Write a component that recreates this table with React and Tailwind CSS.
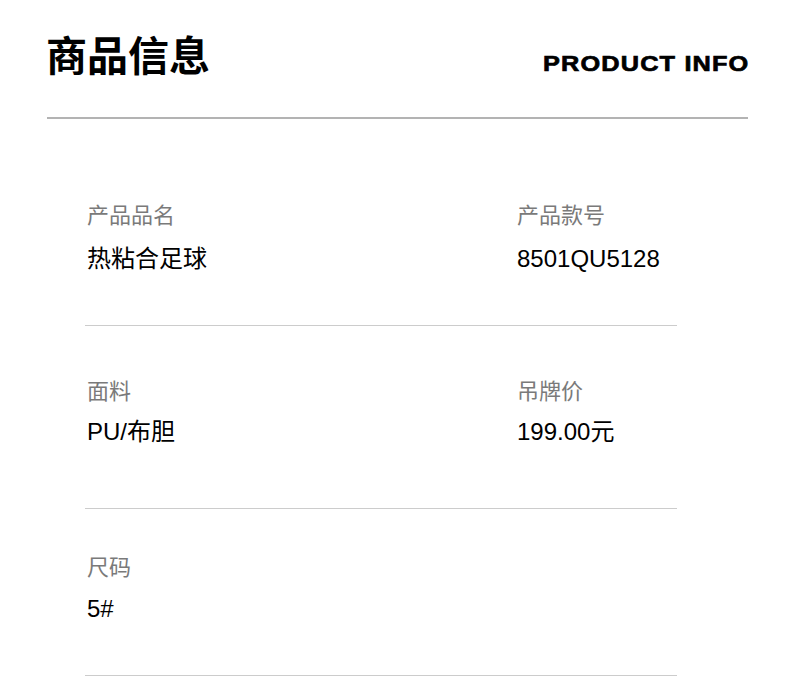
import React from 'react';

const font = { fontFamily: '"Liberation Sans", "Noto Sans CJK SC", sans-serif' };

const rows = [
  {
    pad: 'pt-[86px] pb-[54px]',
    gap: 'mt-[20px]',
    items: [
      { label: '产品品名', value: '热粘合足球' },
      { label: '产品款号', value: '8501QU5128' },
    ],
  },
  {
    pad: 'pt-[55px] pb-[64px]',
    gap: 'mt-[17px]',
    items: [
      { label: '面料', value: 'PU/布胆' },
      { label: '吊牌价', value: '199.00元' },
    ],
  },
  {
    pad: 'pt-[48px] pb-[54px]',
    gap: 'mt-[18px]',
    items: [{ label: '尺码', value: '5#' }],
  },
];

const InfoRow = ({ row }) => (
  <div>
    <div className={`grid grid-cols-[430px_1fr] pl-[2px] ${row.pad}`}>
      {row.items.map((item) => (
        <div key={item.label}>
          <p className="text-[22px] leading-[22px] text-[#7a7a7a]">{item.label}</p>
          <p className={`text-[24px] leading-[24px] text-black ${row.gap}`}>{item.value}</p>
        </div>
      ))}
    </div>
    <div className="h-px bg-[#cccccc]"></div>
  </div>
);

export default function App() {
  return (
    <div className="w-[790px] h-[697px] bg-white overflow-hidden" style={font}>
      <div className="flex items-baseline justify-between pt-[37px] pl-[46px] pr-[41px]">
        <h1 className="text-[41px] leading-[40px] font-bold text-black">商品信息</h1>
        <span className="inline-block origin-right scale-x-[1.15] text-[22px] leading-[22px] font-bold tracking-[1px] text-black [-webkit-text-stroke:0.7px_black]">
          PRODUCT INFO
        </span>
      </div>
      <div className="ml-[47px] mr-[42px] mt-[40px] h-[2px] bg-[#b3b3b3]"></div>
      <div className="ml-[85px] w-[592px]">
        {rows.map((row, i) => (
          <InfoRow key={i} row={row} />
        ))}
      </div>
    </div>
  );
}
